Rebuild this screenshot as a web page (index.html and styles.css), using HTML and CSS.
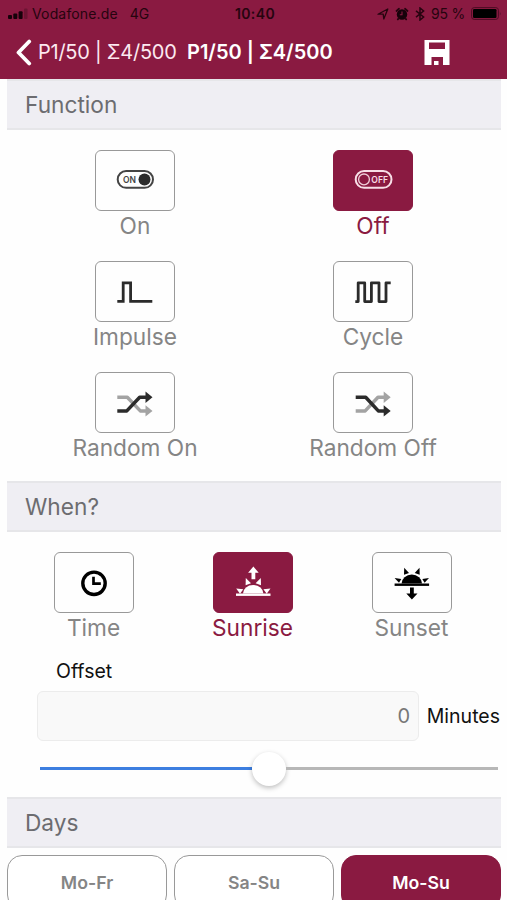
FILE: index.html
```html
<!DOCTYPE html>
<html lang="en">
<head>
    <meta charset="UTF-8">
    <meta name="viewport" content="width=device-width, initial-scale=1.0">
    <title>Timer Program</title>
    <link rel="stylesheet" href="styles.css">
</head>
<body>

    <header class="header">
        <div class="status-bar">
            <div class="status-left">
                <svg class="signal" width="20" height="12" viewBox="0 0 20 12">
                    <rect x="0" y="7" width="4" height="4" rx="1"/>
                    <rect x="5.3" y="5.5" width="4" height="5.5" rx="1"/>
                    <rect x="10.6" y="3.2" width="4" height="7.8" rx="1"/>
                    <rect x="16" y="0.5" width="3.5" height="10.5" rx="1" opacity="0.25"/>
                </svg>
                <span class="carrier">Vodafone.de</span>
                <span class="network">4G</span>
            </div>
            <span class="clock">10:40</span>
            <div class="status-right">
                <svg width="12" height="12" viewBox="0 0 12 12">
                    <path d="M1 6.2 L10.8 1 L6.8 11 L6.2 6.2 Z" fill="none" stroke="#26040f" stroke-width="1.3" stroke-linejoin="round"/>
                </svg>
                <svg width="14" height="14" viewBox="0 0 14 14">
                    <circle cx="7" cy="7.5" r="5.2" fill="#16020a"/>
                    <path d="M1.5 4 L4 1.8 M12.5 4 L10 1.8 M3.8 11 L2.8 12.4 M10.2 11 L11.2 12.4" stroke="#26040f" stroke-width="1.8" stroke-linecap="round"/>
                    <path d="M7 4.6 V7.7 H4.8" fill="none" stroke="#8a1a41" stroke-width="1.1"/>
                </svg>
                <svg width="10" height="14" viewBox="0 0 10 14">
                    <path d="M1 3.8 L8.6 10 L5 13 V1 L8.6 4 L1 10.2" fill="none" stroke="#26040f" stroke-width="1.5"/>
                </svg>
                <span class="percent">95 %</span>
                <svg class="battery" width="31" height="13" viewBox="0 0 31 13">
                    <rect x="0.6" y="0.6" width="26.8" height="11.8" rx="2.6" fill="none" stroke="#4d0c23" stroke-width="1"/>
                    <rect x="2" y="2" width="23.5" height="9" rx="1.2" fill="#000"/>
                    <path d="M28.8 4.4 Q30.6 6.5 28.8 8.6 Z" fill="#5d1230"/>
                </svg>
            </div>
        </div>
        <nav class="nav-bar">
            <a class="back" href="#">
                <svg width="17" height="27" viewBox="0 0 17 27">
                    <path d="M14.2 2.5 L3.5 13.5 L14.2 24.5" fill="none" stroke="#fff" stroke-width="3.8" stroke-linecap="round" stroke-linejoin="round"/>
                </svg>
                <span>P1/50 | Σ4/500</span>
            </a>
            <h1 class="title">P1/50 | Σ4/500</h1>
            <svg class="save" width="26" height="25" viewBox="0 0 26 25">
                <path fill="#fff" fill-rule="evenodd" d="M0.5 0 H25.5 V25 H19 V17 H7.5 V25 H0.5 Z M5 2.5 V9 H21 V2.5 Z"/>
                <rect x="10" y="21" width="4.5" height="4" fill="#fff"/>
            </svg>
        </nav>
    </header>

    <main>
        <h2 class="section-title">Function</h2>
        <div class="options two-columns">
            <div class="option">
                <div class="tile">
                    <svg width="80" height="61" viewBox="0 0 80 61">
                        <rect x="22.7" y="21" width="35.3" height="16.8" rx="8.4" fill="none" stroke="#444" stroke-width="2"/>
                        <text class="toggle-text" x="28" y="32.9" textLength="13" lengthAdjust="spacingAndGlyphs" fill="#444">ON</text>
                        <circle cx="49.5" cy="29.4" r="6" fill="#2b2b2b"/>
                    </svg>
                </div>
                <span class="label">On</span>
            </div>
            <div class="option selected">
                <div class="tile">
                    <svg width="80" height="61" viewBox="0 0 80 61">
                        <rect x="22.7" y="21" width="35.8" height="16.8" rx="8.4" fill="none" stroke="#f8dfe7" stroke-width="2"/>
                        <circle cx="31" cy="29.4" r="5.4" fill="none" stroke="#f0cfd9" stroke-width="1.3"/>
                        <text class="toggle-text" x="38.3" y="32.8" textLength="16.7" lengthAdjust="spacingAndGlyphs" fill="#f8dfe7">OFF</text>
                    </svg>
                </div>
                <span class="label">Off</span>
            </div>
            <div class="option">
                <div class="tile">
                    <svg width="80" height="61" viewBox="0 0 80 61">
                        <path d="M22.3 40.3 H28.2 V21.8 H35.6 V40.3 H57.3" fill="none" stroke="#2b2b2b" stroke-width="2.8"/>
                    </svg>
                </div>
                <span class="label">Impulse</span>
            </div>
            <div class="option">
                <div class="tile">
                    <svg width="80" height="61" viewBox="0 0 80 61">
                        <path d="M22.3 40.6 H25.2 V21.8 H31.7 V40.6 H38.4 V21.8 H46 V40.6 H53 V21.8 H57.7" fill="none" stroke="#2b2b2b" stroke-width="2.8" stroke-linejoin="round"/>
                    </svg>
                </div>
                <span class="label">Cycle</span>
            </div>
            <div class="option">
                <div class="tile">
                    <svg width="80" height="61" viewBox="0 0 80 61">
                        <g fill="none" stroke-width="3.5" stroke-linejoin="round">
                            <path d="M22.3 25.3 H32.3 L45.3 38.9 H51" stroke="#a3a3a3"/>
                            <path d="M22.3 38.9 H31.8 L44.7 25.3 H51" stroke="#2b2b2b"/>
                        </g>
                        <path d="M50.5 33.2 L57.5 38.9 L50.5 44.6 Z" fill="#a3a3a3"/>
                        <path d="M50.5 19.6 L57.5 25.3 L50.5 31 Z" fill="#2b2b2b"/>
                    </svg>
                </div>
                <span class="label">Random On</span>
            </div>
            <div class="option">
                <div class="tile">
                    <svg width="80" height="61" viewBox="0 0 80 61">
                        <g fill="none" stroke-width="3.5" stroke-linejoin="round">
                            <path d="M22.7 38.9 H32.2 L45 25.3 H51" stroke="#a3a3a3"/>
                            <path d="M22.7 25.3 H32.7 L45.3 38.9 H51" stroke="#2b2b2b"/>
                        </g>
                        <path d="M50.7 19.6 L57.7 25.3 L50.7 31 Z" fill="#a3a3a3"/>
                        <path d="M50.7 33.2 L57.7 38.9 L50.7 44.6 Z" fill="#2b2b2b"/>
                    </svg>
                </div>
                <span class="label">Random Off</span>
            </div>
        </div>

        <h2 class="section-title">When?</h2>
        <div class="options three-columns">
            <div class="option">
                <div class="tile">
                    <svg width="80" height="61" viewBox="0 0 80 61">
                        <circle cx="40" cy="31.3" r="11.2" fill="none" stroke="#000" stroke-width="3.4"/>
                        <path d="M39.5 24.8 V31.7 H46.8" fill="none" stroke="#000" stroke-width="2.7"/>
                    </svg>
                </div>
                <span class="label">Time</span>
            </div>
            <div class="option selected">
                <div class="tile">
                    <svg width="80" height="61" viewBox="0 0 80 61" fill="#fff">
                        <path d="M40.4 14.6 L45.7 20.8 H42.3 V27.3 H38.5 V20.8 H35.1 Z"/>
                        <path d="M30 41.5 A10.2 8.5 0 0 1 50.4 41.5 Z"/>
                        <rect x="23" y="41.5" width="34.5" height="2.4"/>
                        <path d="M32.8 26 L38 31.2 L32.6 33.2 Z"/>
                        <path d="M47.8 26 L42.6 31.2 L48 33.2 Z"/>
                        <path d="M23.2 36.6 L30.3 37.2 L27 41.7 Z"/>
                        <path d="M57.5 36.6 L50.4 37.2 L53.7 41.7 Z"/>
                    </svg>
                </div>
                <span class="label">Sunrise</span>
            </div>
            <div class="option">
                <div class="tile">
                    <svg width="80" height="61" viewBox="0 0 80 61" fill="#000">
                        <path d="M29.6 31.6 A10.2 9 0 0 1 50 31.6 Z"/>
                        <rect x="22.6" y="31.5" width="34.5" height="2.4"/>
                        <path d="M32.2 15.8 L37 21 L32 22.8 Z"/>
                        <path d="M47.5 15.8 L42.7 21 L47.7 22.8 Z"/>
                        <path d="M22.6 26 L29.3 27 L27 30.8 Z"/>
                        <path d="M57 26 L50.3 27 L52.6 30.8 Z"/>
                        <path d="M38 35.6 H41.8 V41.4 H45.5 L39.9 47.4 L34.3 41.4 H38 Z"/>
                    </svg>
                </div>
                <span class="label">Sunset</span>
            </div>
        </div>

        <div class="offset">
            <label class="offset-label" for="offset">Offset</label>
            <div class="offset-row">
                <input type="text" id="offset" value="0">
                <span>Minutes</span>
            </div>
            <div class="slider">
                <div class="track-filled"></div>
                <div class="thumb"></div>
                <div class="track"></div>
            </div>
        </div>

        <h2 class="section-title">Days</h2>
        <div class="days">
            <button>Mo-Fr</button>
            <button>Sa-Su</button>
            <button class="active">Mo-Su</button>
        </div>
    </main>

</body>
</html>
```

FILE: styles.css
```css
* {
    box-sizing: border-box;
}

body {
    font-family: Inter, "Liberation Sans", sans-serif;
    margin: 0;
    height: 900px;
    overflow: hidden;
    background-color: #fefefe;
}

svg {
    display: block;
    flex-shrink: 0;
}

/* Header */
.header {
    height: 79px;
    background-color: #8a1a41;
}

.status-bar {
    display: grid;
    grid-template-columns: 1fr auto 1fr;
    align-items: center;
    height: 27px;
    padding: 0 5px 0 8px;
    color: #26040f;
    font-size: 14px;
}

.signal {
    fill: #16020a;
}

.status-left,
.status-right {
    display: flex;
    align-items: center;
}

.carrier {
    margin-left: 4px;
    letter-spacing: 0.15px;
}

.network {
    margin-left: 12px;
}

.clock {
    font-weight: 600;
    letter-spacing: 0.4px;
}

.status-right {
    justify-content: flex-end;
    gap: 6px;
}

.percent {
    white-space: nowrap;
    letter-spacing: -0.2px;
}

.nav-bar {
    display: flex;
    align-items: center;
    height: 50px;
    padding-left: 15px;
    color: #fff;
    font-size: 20px;
}

.back {
    display: flex;
    align-items: center;
    gap: 6px;
    width: 172px;
    color: #fce9f0;
    letter-spacing: -0.25px;
    text-decoration: none;
    white-space: nowrap;
}

.title {
    width: 237px;
    margin: 0;
    font-size: 20px;
    font-weight: 600;
    white-space: nowrap;
}

/* Sections */
.section-title {
    height: 51px;
    margin: 0 6px 0 7px;
    padding-left: 18px;
    border-top: 2px solid #e6e6e9;
    border-bottom: 2px solid #e6e6e9;
    background-color: #efeef3;
    color: #6c6c70;
    font-size: 22.7px;
    font-weight: 400;
    line-height: 48px;
}

.options {
    display: grid;
}

.two-columns {
    grid-template-columns: 1fr 1fr;
    grid-auto-rows: 111px;
    height: 351px;
    padding: 20px 15px 0 16px;
}

.three-columns {
    grid-template-columns: 1fr 1fr 1fr;
    height: 124px;
    padding: 20px 16px 0 14px;
}

.option {
    display: flex;
    flex-direction: column;
    align-items: center;
    color: #858585;
}

.tile {
    display: flex;
    align-items: center;
    justify-content: center;
    width: 80px;
    height: 61px;
    border: 1px solid #999;
    border-radius: 6px;
}

.label {
    font-size: 22.7px;
    line-height: 30px;
}

.selected {
    color: #8a1a41;
}

.selected .tile {
    border-color: #8a1a41;
    background-color: #8a1a41;
}

.toggle-text {
    font-size: 9.5px;
    font-weight: 600;
}

/* Offset */
.offset {
    height: 141px;
    padding: 4px 7px 0 37px;
    color: #111;
    font-size: 19.5px;
}

.offset-label {
    display: block;
    height: 31px;
    padding-left: 19px;
    line-height: 23px;
}

.offset-row {
    display: flex;
    align-items: center;
    justify-content: space-between;
}

.offset-row input {
    width: 382px;
    height: 50px;
    padding: 0 8px;
    border: 1px solid #ececec;
    border-radius: 6px;
    background-color: #f9f9f9;
    color: #777;
    font-family: inherit;
    font-size: 20px;
    text-align: right;
}

.slider {
    display: flex;
    align-items: center;
    height: 35px;
    margin: 10px 2px 0 3px;
}

.track-filled {
    width: 212px;
    height: 3px;
    background-color: #3c7ee0;
}

.thumb {
    width: 34px;
    height: 34px;
    border-radius: 50%;
    background-color: #fff;
    box-shadow: 0 2px 5px rgba(0, 0, 0, 0.25);
}

.track {
    flex: 1;
    height: 3px;
    background-color: #b7b7b7;
}

/* Days */
.days {
    display: grid;
    grid-template-columns: 1fr 1fr 1fr;
    gap: 7px;
    padding: 7px 6px 0 7px;
}

.days button {
    height: 55px;
    border: 1px solid #999;
    border-radius: 15px;
    background-color: #fff;
    color: #858585;
    font-family: inherit;
    font-size: 17.7px;
    font-weight: 600;
}

.days .active {
    border-color: #8a1a41;
    background-color: #8a1a41;
    color: #fff;
}
```
